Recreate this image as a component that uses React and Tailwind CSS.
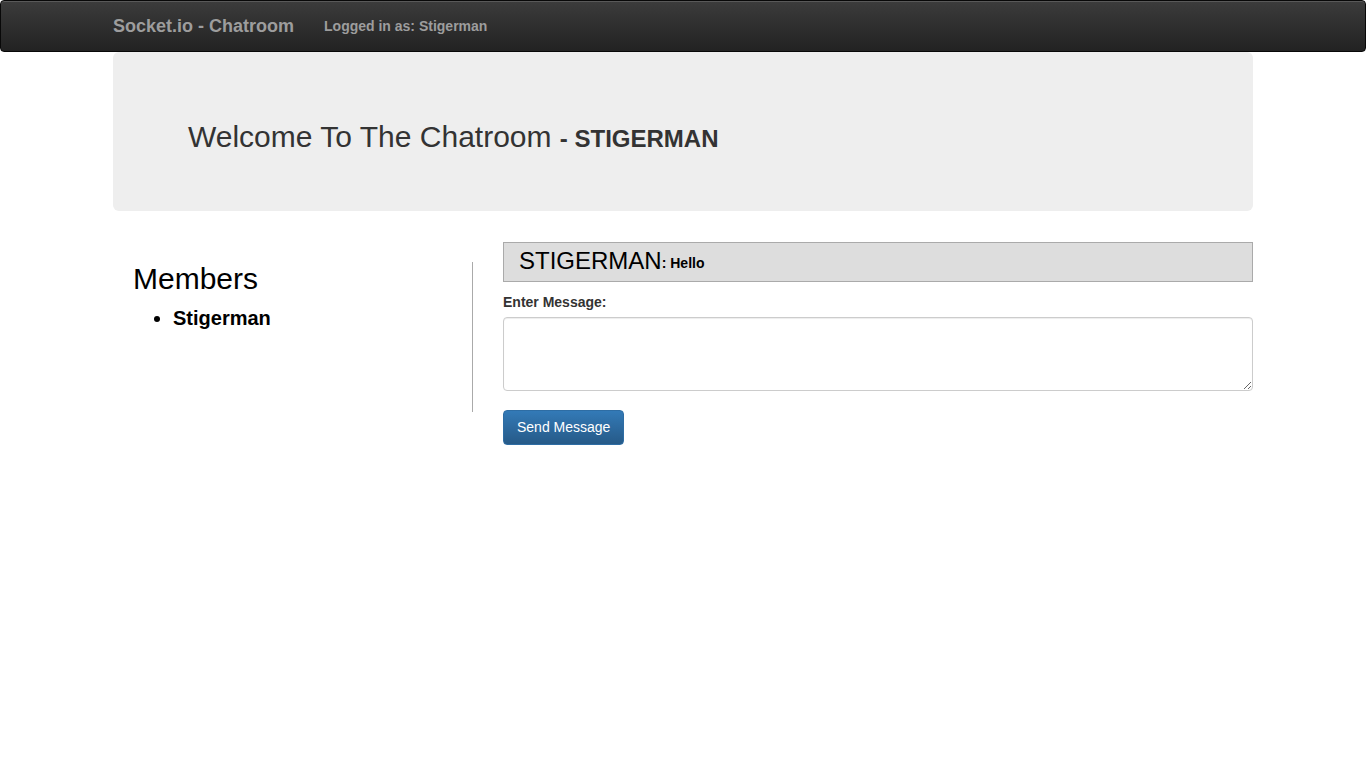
import React from 'react'

export default function App(){
  return (
    <div className="min-h-[768px] bg-white text-[#333] text-[14px]" style={{fontFamily: '"Liberation Sans", Arial, sans-serif'}}>
      <nav className="h-[52px] rounded-[4px] border border-[#080808] bg-gradient-to-b from-[#3c3c3c] to-[#222] shadow-[inset_0_1px_0_rgba(255,255,255,0.15)]">
        <div className="w-[1140px] mx-auto flex items-center h-full">
          <span className="text-[18px] font-bold text-[#9d9d9d]">Socket.io - Chatroom</span>
          <span className="ml-[30px] text-[14px] font-bold text-[#9d9d9d] pt-[1px]">Logged in as: Stigerman</span>
        </div>
      </nav>

      <div className="w-[1140px] mx-auto">
        <div className="h-[159px] bg-[#eee] rounded-[6px] flex items-center pl-[75px] pt-[10px]">
          <h1 className="text-[30px] leading-none text-[#333]">
            Welcome To The Chatroom <span className="text-[24px] font-bold uppercase">- Stigerman</span>
          </h1>
        </div>

        <div className="flex mt-[31px] items-start">
          <div className="w-[339px] box-content pl-[20px] mt-[20px] h-[150px] border-r border-[#aaa]">
            <h2 className="text-[30px] leading-[33px] text-black">Members</h2>
            <ul className="list-disc pl-[40px] mt-[12px] text-black">
              <li className="text-[20px] font-bold leading-[23px]">Stigerman</li>
            </ul>
          </div>
          <div className="flex-1 pl-[30px]">
            <div className="h-[40px] bg-[#ddd] border border-[#aaa] flex items-center pl-[15px] pb-[3px] text-black">
              <span className="text-[24px]">STIGERMAN</span>
              <span className="text-[14px] font-bold mt-[6px]">: Hello</span>
            </div>
            <label className="block mt-[12px] text-[14px] leading-[16px] font-bold text-[#333]">Enter Message:</label>
            <textarea className="block mt-[7px] w-full h-[74px] rounded-[4px] border border-[#ccc] shadow-[inset_0_1px_1px_rgba(0,0,0,0.075)] outline-none"></textarea>
            <button className="mt-[19px] h-[35px] px-[13px] rounded-[4px] border border-[#2e6da4] bg-gradient-to-b from-[#337ab7] to-[#265a88] text-white text-[14px]">Send Message</button>
          </div>
        </div>
      </div>
    </div>
  )
}
